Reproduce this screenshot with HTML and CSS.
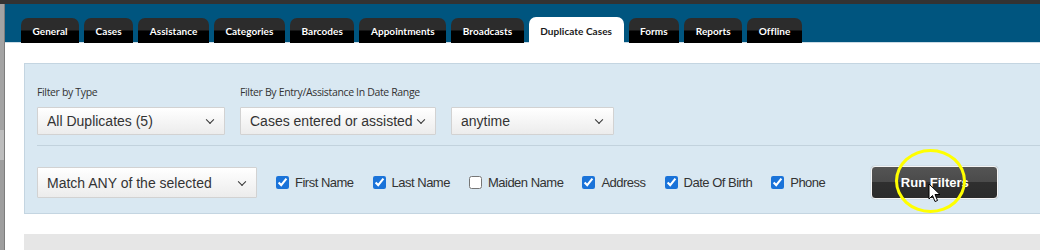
FILE: index.html
```
<!DOCTYPE html>
<html lang="en">
<head>
  <meta charset="UTF-8">
  <title>Duplicate Cases</title>
  <link rel="stylesheet" href="styles.css">
</head>
<body>

<div class="topbar"></div>
<div class="frame">
  <div class="strip"></div>
  <div class="main">
    <div class="tabbar">
      <a class="tab">General</a>
      <a class="tab">Cases</a>
      <a class="tab">Assistance</a>
      <a class="tab">Categories</a>
      <a class="tab">Barcodes</a>
      <a class="tab">Appointments</a>
      <a class="tab">Broadcasts</a>
      <a class="tab active">Duplicate Cases</a>
      <a class="tab">Forms</a>
      <a class="tab">Reports</a>
      <a class="tab">Offline</a>
    </div>

    <div class="content">
      <div class="panel">
        <div class="row top-row">
          <div class="field">
            <label class="field-label">Filter by Type</label>
            <div class="select-wrap w-type">
              <select><option>All Duplicates (5)</option></select>
            </div>
          </div>
          <div class="field">
            <label class="field-label">Filter By Entry/Assistance In Date Range</label>
            <div class="pair">
              <div class="select-wrap w-entry">
                <select><option>Cases entered or assisted</option></select>
              </div>
              <div class="select-wrap w-time">
                <select><option>anytime</option></select>
              </div>
            </div>
          </div>
        </div>

        <div class="divider"></div>

        <div class="row bottom-row">
          <div class="select-wrap w-match tall">
            <select><option>Match ANY of the selected</option></select>
          </div>
          <div class="checks">
            <label class="check"><input type="checkbox" checked> First Name</label>
            <label class="check"><input type="checkbox" checked> Last Name</label>
            <label class="check"><input type="checkbox"> Maiden Name</label>
            <label class="check"><input type="checkbox" checked> Address</label>
            <label class="check"><input type="checkbox" checked> Date Of Birth</label>
            <label class="check"><input type="checkbox" checked> Phone</label>
          </div>
          <div class="btn-wrap">
            <button class="run-btn">Run Filters</button>
            <span class="highlight"></span>
            <svg class="cursor" width="13" height="20" viewBox="0 0 13 20">
              <path d="M1 1 L1 16 L4.5 12.5 L7 18.5 L9.5 17.5 L7 11.5 L12 11.5 Z" fill="#fff" stroke="#000" stroke-width="1" stroke-linejoin="round"/>
            </svg>
          </div>
        </div>
      </div>

      <div class="lower"></div>
    </div>
  </div>
</div>

</body>
</html>
```

FILE: styles.css
```
* {
  box-sizing: border-box;
  margin: 0;
  padding: 0;
}

body {
  width: 1040px;
  height: 250px;
  overflow: hidden;
  background: #fff;
  font-family: 'Liberation Sans', Arial, sans-serif;
}

.topbar {
  height: 4px;
  background: #333;
}

.frame {
  display: flex;
  height: 246px;
}

.strip {
  width: 5px;
  background: linear-gradient(to bottom, #a3a3a3 0, #a3a3a3 126px, #bdbdbd 126px, #bdbdbd 156px, #9e9e9e 156px);
  border-right: 1px solid #7d7d7d;
}

.main {
  flex: 1;
  min-width: 0;
}

.tabbar {
  height: 39px;
  background: #00557f;
  border-bottom: 1px solid #cbdbe5;
  display: flex;
  align-items: flex-end;
  gap: 5px;
  padding-left: 16px;
}

.tab {
  height: 25px;
  padding: 1px 11.5px 0;
  display: flex;
  align-items: center;
  border-radius: 7px 7px 0 0;
  background: linear-gradient(to bottom, #2c2c2c 0, #2c2c2c 48%, #000 52%, #000 100%);
  color: #fff;
  font-family: Lato, 'Open Sans', sans-serif;
  font-weight: bold;
  font-size: 10px;
  letter-spacing: 0.05px;
  white-space: nowrap;
  margin-bottom: -1px;
}

.tab.active {
  background: #fff;
  color: #1a1a1a;
  height: 26px;
}

.content {
  padding: 20px 0 0 19px;
}

.panel {
  background: #d9e8f2;
  border: 1px solid #c4d5e1;
  border-right: none;
  padding: 21px 0 14px 0;
}

.row {
  display: flex;
  padding-left: 12px;
}

.top-row {
  gap: 15px;
}

.field-label {
  display: block;
  font-family: 'Open Sans', sans-serif;
  font-size: 10.5px;
  letter-spacing: -0.35px;
  color: #333;
  height: 14px;
  line-height: 14px;
  margin-bottom: 8px;
}

.pair {
  display: flex;
  gap: 15px;
}

.select-wrap {
  position: relative;
  height: 28px;
}

.select-wrap.tall {
  height: 31px;
}

.select-wrap select {
  appearance: none;
  -webkit-appearance: none;
  width: 100%;
  height: 100%;
  border: 1px solid #d2d2d2;
  border-radius: 1px;
  background: linear-gradient(to bottom, #ffffff, #ececec);
  font-family: 'Liberation Sans', Arial, sans-serif;
  font-size: 14px;
  color: #333;
  padding-left: 9px;
  outline: none;
}

.select-wrap::after {
  content: "";
  position: absolute;
  right: 12px;
  top: 50%;
  width: 5px;
  height: 5px;
  border-right: 1.6px solid #333;
  border-bottom: 1.6px solid #333;
  transform: translateY(-70%) rotate(45deg);
  pointer-events: none;
}

.w-type { width: 188px; }
.w-entry { width: 196px; }
.w-time { width: 163px; }
.w-match { width: 220px; }

.divider {
  height: 1px;
  background: #c2d2dd;
  margin: 10px 0 20px 12px;
}

.bottom-row {
  align-items: center;
}

.checks {
  display: flex;
  align-items: center;
  gap: 19px;
  margin-left: 19px;
}

.check {
  display: flex;
  align-items: center;
  gap: 6px;
  font-family: 'Liberation Sans', Arial, sans-serif;
  font-size: 13px;
  letter-spacing: -0.5px;
  color: #333;
  white-space: nowrap;
}

.check input {
  width: 13px;
  height: 13px;
  accent-color: #1a73d9;
}

.btn-wrap {
  position: relative;
  margin-left: 46px;
}

.run-btn {
  width: 127px;
  height: 33px;
  border: 1px solid #f4f4f4;
  border-radius: 4px;
  background: linear-gradient(to bottom, #545454 0, #4a4a4a 50%, #2f2f2f 50%, #2b2b2b 100%);
  color: #fff;
  font-family: 'Liberation Sans', Arial, sans-serif;
  font-weight: bold;
  font-size: 13px;
  box-shadow: 0 0 1px rgba(0,0,0,0.4);
}

.highlight {
  position: absolute;
  left: 24px;
  top: -17px;
  width: 71px;
  height: 64px;
  border: 3px solid #ffff00;
  border-radius: 50%;
  pointer-events: none;
}

.cursor {
  position: absolute;
  left: 57px;
  top: 17px;
  pointer-events: none;
}

.lower {
  margin-top: 20px;
  height: 20px;
  background: #e6e6e6;
}
```
